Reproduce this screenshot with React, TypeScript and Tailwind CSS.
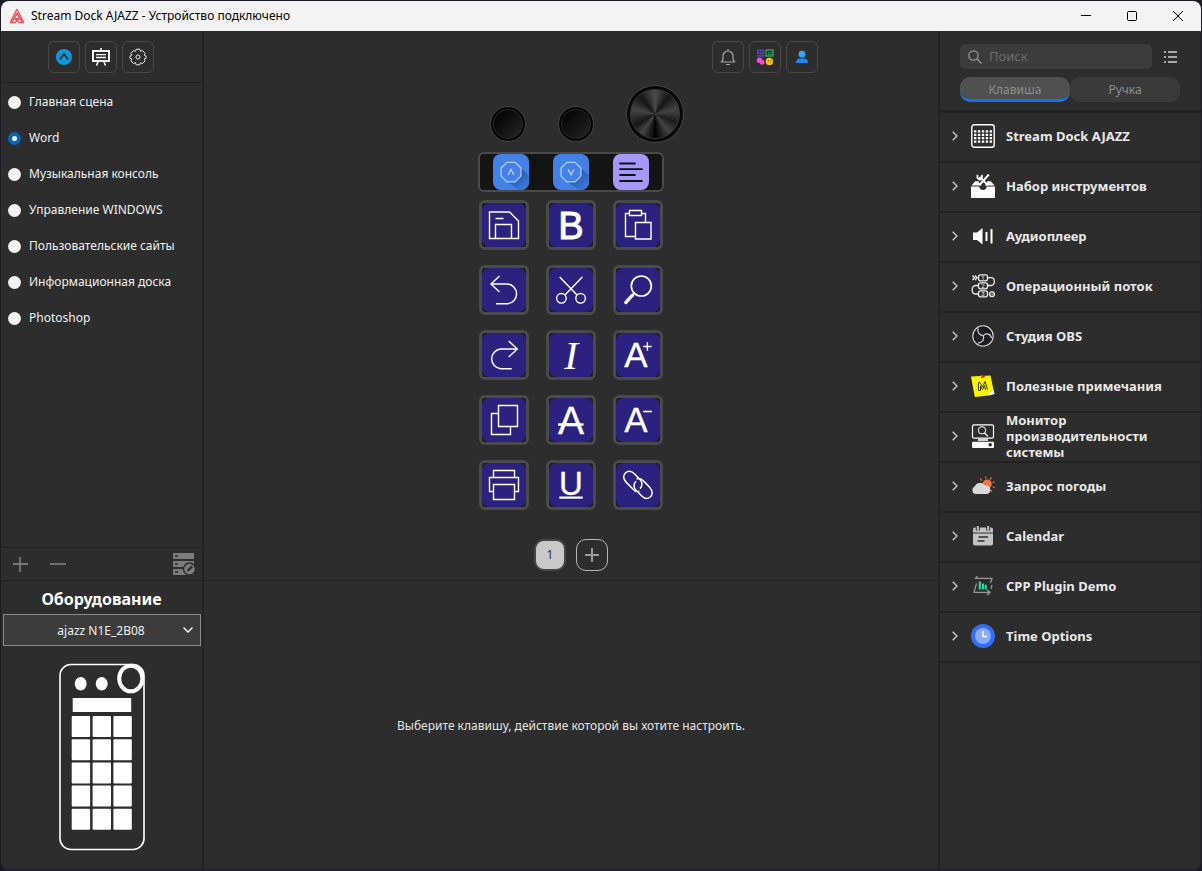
import { ReactNode, useState } from 'react';

const scenes = [
    'Главная сцена',
    'Word',
    'Музыкальная консоль',
    'Управление WINDOWS',
    'Пользовательские сайты',
    'Информационная доска',
    'Photoshop',
];

const glyph = {
    fill: '#fff',
    stroke: '#fff',
    strokeWidth: 0.3,
    textAnchor: 'middle' as const,
    fontFamily: '"Liberation Sans", Arial, sans-serif',
    fontWeight: 400,
};

// Icons of the 15 keys, all drawn on a 50x50 canvas
const keyIcons: { name: string; icon: ReactNode }[] = [
    {
        name: 'Сохранить',
        icon: <path d="M10.5 12H30.5L39.5 21V38.5H10.5ZM16.5 18.5H24.5M16.5 38.5V24.5H32.5V38.5" />,
    },
    { name: 'Полужирный', icon: <text x="25" y="38.5" fontSize="38" {...glyph} strokeWidth={1}>B</text> },
    {
        name: 'Вставить',
        icon: (
            <>
                <path d="M16.5 13.5H12.5V36.5H22.5M28.5 13.5H32.5V22.5" />
                <path d="M16.5 10.5H28.5V15.5H16.5ZM22.5 22.5H38V39H22.5Z" />
            </>
        ),
    },
    { name: 'Отменить', icon: <path d="M20.5 11L12 19L20.5 27M12 19H28.7A9.9 9.9 0 0 1 28.7 38.7H17" /> },
    {
        name: 'Вырезать',
        icon: (
            <>
                <path d="M13.7 12L31 30M36.3 12L19 30" />
                <circle cx="15.4" cy="33.3" r="4.8" />
                <circle cx="34.6" cy="33.3" r="4.8" />
            </>
        ),
    },
    {
        name: 'Найти',
        icon: (
            <>
                <circle cx="28.3" cy="21" r="10" strokeWidth="1.7" />
                <path d="M21.5 28L18.5 31.2" strokeWidth="1.7" />
                <path d="M19.5 30.2L12.9 37.4" strokeWidth="3.4" strokeLinecap="round" />
            </>
        ),
    },
    { name: 'Повторить', icon: <path d="M29.7 11L38.3 19L29.7 27M38.3 19H21.6A9.9 9.9 0 0 0 21.6 38.7H32.7" /> },
    {
        name: 'Курсив',
        icon: (
            <text x="25" y="38.5" fontSize="41" {...glyph} stroke="none" fontFamily='"Liberation Serif", serif' fontStyle="italic">I</text>
        ),
    },
    {
        name: 'Увеличить шрифт',
        icon: (
            <>
                <text x="23" y="37.3" fontSize="35" {...glyph}>A</text>
                <path d="M30.2 16.5H38.6M34.4 12.3V20.7" />
            </>
        ),
    },
    {
        name: 'Копировать',
        icon: <path d="M19.5 10.5H38.5V31.5H19.5ZM19.5 18.5H12.5V39.5H31.5V31.5" />,
    },
    {
        name: 'Зачёркнутый',
        icon: (
            <>
                <text x="25" y="39" fontSize="39" {...glyph}>A</text>
                <path d="M12 29.5H37.6" strokeWidth="2.4" />
            </>
        ),
    },
    {
        name: 'Уменьшить шрифт',
        icon: (
            <>
                <text x="23" y="37.3" fontSize="35" {...glyph}>A</text>
                <path d="M30.2 16.5H38.8" strokeWidth="1.6" />
            </>
        ),
    },
    {
        name: 'Печать',
        icon: (
            <>
                <path d="M14.5 17.5V10.5H35.5V17.5M14.5 31.5H10.5V17.5H39.5V31.5H35.5" />
                <path d="M14.5 24.5H35.5V39.5H14.5Z" />
            </>
        ),
    },
    {
        name: 'Подчёркнутый',
        icon: (
            <>
                <text x="25" y="34.5" fontSize="33" {...glyph}>U</text>
                <path d="M13.3 37.6H36.7" strokeWidth="2.2" />
            </>
        ),
    },
    {
        name: 'Ссылка',
        icon: (
            <g strokeWidth="1.5">
                <path d="M26.4 30.8C23 32.6 21 30.4 18.6 27.8L13.3 22.4C9.6 18.6 10.2 14.8 12.6 12.8C15 10.7 18.4 10.8 21.4 13.8L27.2 19.7C29.6 22.2 29.5 26.4 27 28.6" />
                <path d="M23.6 19.2C27 17.4 29.4 19.8 32 22.4L36.8 27.4C40.4 31.2 39.4 35 37.2 37C34.8 39 31.6 38.8 28.8 36L22.8 30C20.4 27.6 20.4 23.4 23 21.2" />
            </g>
        ),
    },
];

// Plugin icons are drawn on a 24x24 canvas
const plugins: { name: string; icon: ReactNode }[] = [
    {
        name: 'Stream Dock AJAZZ',
        icon: (
            <>
                <rect x=".8" y=".8" width="22.4" height="22.4" rx="2.5" fill="none" stroke="#fff" strokeWidth="1.4" />
                {[7.4, 10.8, 14.2, 17.6].map((y) => (
                    <path key={y} d={`M3 ${y}H21`} fill="none" stroke="#fff" strokeWidth="2.2" strokeDasharray="2.4 1.5" />
                ))}
            </>
        ),
    },
    {
        name: 'Набор инструментов',
        icon: (
            <>
                <path d="M0 12.5H8.2C8.8 15.3 10 16 12 16S15.2 15.3 15.8 12.5H24V24H0Z" fill="#fff" />
                <path d="M.5 11.5L4.2 7.2H7.5L10 11.5ZM23.5 11.5L19.8 7.2H16.5L14 11.5Z" fill="#fff" />
                <path d="M8.5 3L17 11.2M17.8 .5L8.5 11" stroke="#fff" strokeWidth="2" />
                <path d="M6.4 .8V3.8L8.6 5.6L11 4V.8" fill="none" stroke="#fff" strokeWidth="1.7" />
                <circle cx="12" cy="13" r="2.2" fill="#2d2d2d" />
            </>
        ),
    },
    {
        name: 'Аудиоплеер',
        icon: (
            <>
                <path d="M2 8.5H6L11.5 4V20.5L6 16H2Z" fill="#fff" />
                <path d="M15.5 8V17M20.5 5V19.5" stroke="#fff" strokeWidth="2" />
            </>
        ),
    },
    {
        name: 'Операционный поток',
        icon: (
            <g fill="none" stroke="#eee" strokeWidth="1.3">
                <path d="M1.5 1.5L3.5 3.7L1.5 6M4 1.5L6 3.7L4 6M16.5 3.7H20C24.5 3.7 24.5 11.5 20 11.5H16.5M7 11.5H4.5C0 11.5 0 20 4.5 20H7" />
                {[1, 2, 3].map((n) => (
                    <g key={n}>
                        <rect x="7.5" y={n * 8 - 7.2} width="9" height="6" rx="2" />
                        <text x="12" y={n * 8 - 2} textAnchor="middle" fontSize="6" fontFamily="Roboto, sans-serif" fill="#eee" stroke="none">{n}</text>
                    </g>
                ))}
                <circle cx="21" cy="20.2" r="2.4" />
                <path d="M19.8 20.2L20.8 21.2L22.4 19.2" strokeWidth=".8" />
            </g>
        ),
    },
    {
        name: 'Студия OBS',
        icon: (
            <>
                <circle cx="12" cy="12" r="10.2" fill="#1c1a1e" stroke="#ddd" strokeWidth="1.1" />
                <g fill="none" stroke="#ccc" strokeWidth="1.3">
                    <path d="M7 4.3C6.2 8.4 8.2 11.3 12.2 11.6" />
                    <path d="M20.5 14.2C19.5 9.6 15.3 8.6 12.2 11.6" />
                    <path d="M7.2 19C11.5 18.8 13.8 15.5 12.2 11.6" />
                </g>
            </>
        ),
    },
    {
        name: 'Полезные примечания',
        icon: (
            <>
                <path d="M0 2.5L19.5 1.5L22.5 16L17.5 21.5L3.8 23Z" fill="#fdf500" />
                <path d="M22.5 16L23.5 20L17.5 21.7L18.5 17.5Z" fill="#fff" />
                <path d="M7.5 16.5V8.5H9L11.5 13L14 7.5L16.5 15.5M7.5 16.5H9.5V12L11.5 15.5L13.5 11.5L14.5 16" fill="none" stroke="#3a3a10" strokeWidth="1" />
                <path d="M9.5 .8L13 2.8L10 3.6" stroke="#d8281c" strokeWidth="1.4" fill="none" />
            </>
        ),
    },
    {
        name: 'Монитор производительности системы',
        icon: (
            <>
                <rect x="1.5" y=".8" width="21" height="13.4" rx="1.5" fill="none" stroke="#fff" strokeWidth="1.2" />
                <circle cx="11" cy="6.3" r="3.7" fill="none" stroke="#fff" strokeWidth="1" />
                <path d="M13.5 9L17 12.4" stroke="#fff" strokeWidth="1.2" />
                <path d="M7 16H17" stroke="#fff" strokeWidth="1.6" />
                <rect x="1" y="17.8" width="22" height="6.2" rx="1" fill="#fff" />
                <circle cx="19.2" cy="20.8" r="1.8" fill="#2d2d2d" />
            </>
        ),
    },
    {
        name: 'Запрос погоды',
        icon: (
            <>
                <path d="M10.7 6.6L9.3 4.2M14.8 4.8V2.6M19 5.6L20.4 3.4M21.4 8.8L23.6 8M21.6 12.8L23.6 13.8M19.5 15.8L21 17.6" stroke="#e8703f" strokeWidth="1.2" />
                <circle cx="16.2" cy="10" r="4.6" fill="#f07640" />
                <path d="M4 20A4 4 0 0 1 3.6 12.6A6 6 0 0 1 14.2 11.6A4.4 4.4 0 0 1 16.6 20Z" fill="#d9d9d9" />
            </>
        ),
    },
    {
        name: 'Calendar',
        icon: (
            <>
                <path d="M2 8.5V5.2Q2 3.5 3.8 3.5H20.2Q22 3.5 22 5.2V8.5Z" fill="#c4c4c4" />
                <path d="M2 9.5H22V19.5Q22 21.5 20 21.5H4Q2 21.5 2 19.5Z" fill="#c4c4c4" />
                <path d="M6.8 2V6.5M17.2 2V6.5" stroke="#2d2d2d" strokeWidth="4" />
                <path d="M6.8 2V6.5M17.2 2V6.5" stroke="#c4c4c4" strokeWidth="2" />
                <path d="M7.5 13H17M6.5 17H13.5" stroke="#2d2d2d" strokeWidth="1.3" />
            </>
        ),
    },
    {
        name: 'CPP Plugin Demo',
        icon: (
            <>
                <path d="M6.5 2.2L4.5 4.3H21L19.5 9M17.8 19.8L19 18.3H3L5.5 9.5M16 16L19 18.3L16 21M21 11L20 15" fill="none" stroke="#999" strokeWidth="1.2" />
                <path d="M8.8 7.5V15.5M12 9.5V15.5M14.8 10.8V15.5" stroke="#27d8a4" strokeWidth="2.2" />
            </>
        ),
    },
    {
        name: 'Time Options',
        icon: (
            <>
                <circle cx="12" cy="12" r="12" fill="#326df4" />
                <circle cx="12" cy="12" r="8" fill="#86acfa" />
                <path d="M12 7V12.5H16" fill="none" stroke="#fff" strokeWidth="1.5" />
            </>
        ),
    },
];

const ToolButton = ({ label, children }: { label: string; children: ReactNode }) => (
    <button aria-label={label} className="flex size-8 shrink-0 items-center justify-center rounded-md border border-[#484848]">
        <svg viewBox="0 0 18 18" className="size-[18px]" fill="none">{children}</svg>
    </button>
);

const TitleBar = () => (
    <header className="flex h-[30px] shrink-0 items-center bg-[#f3f3f3] pl-2 text-black">
        <svg viewBox="0 0 16 16" className="size-4" fill="none" stroke="#e85a60">
            <path d="M8 1L1.2 14.6M8 1L14.8 14.6M8 4.6L3 14.4M8 4.6L13 14.4" strokeWidth="1.3" />
            <path d="M5.4 10.5L8 5.8L10.6 10.5ZM1 14.6H6.2L8 11.6L9.8 14.6H15M5.4 10.5L8 13L10.6 10.5" strokeWidth="1.1" />
        </svg>
        <h1 className="ml-1.5 flex-1 text-xs">Stream Dock AJAZZ - Устройство подключено</h1>
        <div className="flex h-full">
            <button aria-label="Свернуть" className="flex w-[46px] items-center justify-center">
                <svg viewBox="0 0 10 10" className="size-2.5" stroke="#000"><path d="M0 4.5H10" /></svg>
            </button>
            <button aria-label="Развернуть" className="flex w-[46px] items-center justify-center">
                <svg viewBox="0 0 10 10" className="size-2.5" stroke="#000" fill="none"><rect x=".5" y=".5" width="9" height="9" rx="1" /></svg>
            </button>
            <button aria-label="Закрыть" className="flex w-[46px] items-center justify-center">
                <svg viewBox="0 0 10 10" className="size-2.5" stroke="#000"><path d="M0 0L10 10M10 0L0 10" /></svg>
            </button>
        </div>
    </header>
);

const DevicePreview = () => (
    <svg viewBox="-1 0 87 188" className="mx-auto mt-[17px] mb-[19px] h-[188px] w-[87px]" fill="#fff">
        <rect x="1" y="1.5" width="84" height="185" rx="11" fill="none" stroke="#fff" strokeWidth="1.6" />
        <ellipse cx="21.7" cy="20.7" rx="6" ry="6.8" />
        <ellipse cx="42.7" cy="20.7" rx="6" ry="6.8" />
        <ellipse cx="71.8" cy="15.5" rx="11.6" ry="12.8" fill="#2d2d2d" stroke="#fff" strokeWidth="4" />
        <rect x="13.7" y="35" width="58.5" height="14" />
        {[0, 1, 2, 3, 4].map((row) =>
            [12.7, 33.6, 54.4].map((x) => (
                <rect key={`${row}-${x}`} x={x} y={53 + row * 23.2} width="18.4" height="21" rx="1" />
            ))
        )}
    </svg>
);

const Sidebar = () => {
    const [scene, setScene] = useState('Word');

    return (
        <aside className="flex w-[203px] shrink-0 flex-col border-r-2 border-[#232323]">
            <div className="flex h-[52px] items-center justify-center gap-[5px] border-b border-[#222] pr-0.5">
                <ToolButton label="Главная">
                    <circle cx="9" cy="9" r="8" fill="#1296db" />
                    <path d="M4.8 11.6L9 6L13.2 11.6" stroke="#2d2d2d" strokeWidth="1.7" />
                </ToolButton>
                <ToolButton label="Презентация">
                    <path d="M9 0V3M6 14L4.5 17.5M12 14L13.5 17.5" stroke="#fff" strokeWidth="1.6" />
                    <rect x="1" y="3" width="16" height="10" stroke="#fff" strokeWidth="1.9" />
                    <path d="M4 6.7H14M4 9.5H14" stroke="#fff" strokeWidth="1.3" />
                </ToolButton>
                <ToolButton label="Настройки">
                    <path
                        d="M7.2 1.2L10.8 1.2L11.5 3.3L13.6 2.6L16.2 5.4L15.2 7.2L17 8V10.3L15.2 11L16.1 12.9L13.6 15.5L11.5 14.7L10.8 16.8H7.2L6.5 14.7L4.4 15.5L1.9 12.9L2.8 11L1 10.3V8L2.8 7.2L1.8 5.4L4.4 2.6L6.5 3.3Z"
                        stroke="#e5e5e5"
                        strokeLinejoin="round"
                    />
                    <circle cx="9" cy="9" r="2.1" stroke="#e5e5e5" />
                </ToolButton>
            </div>

            <div role="radiogroup" aria-label="Сцены" className="flex-1 pt-px">
                {scenes.map((name) => (
                    <label key={name} className="flex h-9 items-center gap-2 pl-[7px] text-xs text-[#f0f0f0]">
                        <input
                            type="radio"
                            name="scene"
                            checked={scene === name}
                            onChange={() => setScene(name)}
                            className="size-[13px] appearance-none rounded-full bg-[#f3f3f3] checked:border-4 checked:border-[#0a62b8] checked:bg-white"
                        />
                        {name}
                    </label>
                ))}
            </div>

            <div className="flex h-[34px] items-center border-y border-[#222] pr-1.5 pl-3">
                <button aria-label="Добавить сцену">
                    <svg viewBox="0 0 15 15" className="size-[15px]" stroke="#777" strokeWidth="1.8"><path d="M0 7H15M7 0V15" /></svg>
                </button>
                <button aria-label="Удалить сцену" className="ml-[22px]">
                    <svg viewBox="0 0 16 15" className="h-[15px] w-4" stroke="#777" strokeWidth="1.8"><path d="M0 7H16" /></svg>
                </button>
                <button aria-label="Изменить сцены" className="ml-auto">
                    <svg viewBox="0 0 24 24" className="size-6">
                        <path d="M1 1H22V7H1ZM1 9H22V15H1ZM1 17H22V23H1Z" fill="#7c7c7c" />
                        <path d="M3 4H6M3 12H6M3 20H6" stroke="#2d2d2d" strokeWidth="1.3" />
                        <circle cx="17.5" cy="17" r="6" fill="#7c7c7c" stroke="#2d2d2d" strokeWidth="1.4" />
                        <path d="M15 19.8L15.6 17L19.4 13.4L21 15L17.4 18.8Z" fill="#2d2d2d" />
                    </svg>
                </button>
            </div>

            <section>
                <h2 className="h-[33px] pt-1.5 text-center text-base leading-6 font-bold text-white">
                    <label htmlFor="device">Оборудование</label>
                </h2>
                <div className="relative mr-px ml-0.5">
                    <select
                        id="device"
                        className="h-8 w-full appearance-none border border-[#8a8a8a] bg-[#3c3c3c] pt-px pr-0.5 text-xs text-[#f0f0f0] [text-align-last:center]"
                    >
                        <option>ajazz N1E_2B08</option>
                    </select>
                    <svg viewBox="0 0 10 6" className="pointer-events-none absolute top-[13px] right-2 h-1.5 w-2.5" fill="none" stroke="#fff" strokeWidth="1.4">
                        <path d="M.5 .5L5 5L9.5 .5" />
                    </svg>
                </div>
                <DevicePreview />
            </section>
        </aside>
    );
};

const SmallKnob = ({ label }: { label: string }) => (
    <button
        aria-label={label}
        className="mb-px flex size-9 shrink-0 items-center justify-center rounded-full border border-[#444] bg-[#050505]"
    >
        <span className="size-[30px] rounded-full border border-[#2a2a2a] bg-linear-135 from-[#030303] to-[#262626]" />
    </button>
);

const Octagon = ({ label, arrow, id }: { label: string; arrow: string; id: string }) => (
    <button aria-label={label} className="size-9 overflow-hidden rounded-lg bg-[#4381e6]">
        <svg viewBox="0 0 36 36" className="size-9" fill="none">
            <defs>
                <linearGradient id={id} x1="0" y1="0" x2="1" y2="1">
                    <stop offset=".3" stopColor="#1f52a8" />
                    <stop offset="1" stopColor="#4381e6" />
                </linearGradient>
            </defs>
            <path d="M26 12L36 22V36H26L11 25Z" fill={`url(#${id})`} />
            <path d="M13.9 8.3H22.1L27.9 14.1V22.1L22.1 27.9H13.9L8.1 22.1V14.1Z" fill="#4381e6" stroke="#b4cdf8" strokeWidth="1.3" />
            <path d={arrow} stroke="#b4cdf8" strokeWidth="1.4" />
        </svg>
    </button>
);

const Device = () => (
    <div className="mx-auto mt-1 w-[186px]">
        <div className="flex items-end gap-8 pl-3">
            <SmallKnob label="Ручка 1" />
            <SmallKnob label="Ручка 2" />
            <button
                aria-label="Ручка 3"
                className="flex size-[58px] shrink-0 items-center justify-center rounded-full border border-[#444] bg-[#080808]"
            >
                <span className="size-[50px] rounded-full border border-[#383838] bg-[conic-gradient(#4c4c4c_0deg,#151515_38deg,#444_78deg,#1c1c1c_112deg,#444_142deg,#000_180deg,#444_215deg,#161616_240deg,#444_282deg,#151515_320deg,#4c4c4c_360deg)]" />
            </button>
        </div>

        <div className="mt-[9px] flex h-10 items-center justify-between rounded-md border-2 border-[#4a4a4a] bg-[#141414] px-[13px]">
            <Octagon label="Вверх" arrow="M15 20.8L18 15.4L21 20.8" id="shade-up" />
            <Octagon label="Вниз" arrow="M15 15.4L18 20.8L21 15.4" id="shade-down" />
            <button aria-label="Абзац" className="size-9 rounded-lg bg-[#a399fb]">
                <svg viewBox="0 0 36 36" className="size-9" stroke="#111" strokeWidth="1.8" strokeLinecap="round">
                    <path d="M7 9.5H22M7 15.2H29M7 21H22M7 27H29" />
                </svg>
            </button>
        </div>

        <div className="mt-2 grid grid-cols-[repeat(3,50px)] justify-center gap-x-[17px] gap-y-[15px]">
            {keyIcons.map(({ name, icon }) => (
                <button key={name} aria-label={name} className="flex size-[50px] items-center justify-center rounded-md border-3 border-[#4a4a4a] bg-[#1e1e22]">
                    <span className="flex size-11 items-center justify-center rounded-lg bg-[#2b227f]">
                        <svg viewBox="3 3 44 44" className="size-11 overflow-visible" fill="none" stroke="#fff" strokeWidth="1.4">
                            {icon}
                        </svg>
                    </span>
                </button>
            ))}
        </div>
    </div>
);

const Workspace = () => (
    <main className="flex min-w-0 flex-1 flex-col">
        <div className="flex flex-1 flex-col">
            <div className="flex justify-end gap-[5px] pt-2.5 pr-[120px]">
                <ToolButton label="Уведомления">
                    <path d="M9 1V2.5M3 14V12.8L4 11.5V8A5 5 0 0 1 14 8V11.5L15 12.8V14ZM1.8 14H16.2M7 16.5H11" stroke="#aaa" strokeWidth="1.2" />
                </ToolButton>
                <ToolButton label="Магазин">
                    <path d="M1 2.5H8M1 5.2H8M1 7.9H8" stroke="#5a4fd8" strokeWidth="1.9" strokeDasharray="1.9 .65" />
                    <rect x="10" y="2" width="7" height="6" stroke="#2fae62" strokeWidth="1.3" />
                    <path d="M12 4.5H13M14.5 4.5H15.5M12 6.3H15" stroke="#2fae62" />
                    <circle cx="3.6" cy="12.2" r="2.8" fill="#e84fd8" />
                    <circle cx="6.2" cy="14.4" r="2.4" fill="#e84fd8" />
                    <circle cx="13.4" cy="13.4" r="3.7" fill="#f2c21a" />
                    <path d="M12 13H12.9M14.2 13H15.1" stroke="#5a4510" />
                </ToolButton>
                <ToolButton label="Профиль">
                    <circle cx="9" cy="6.2" r="3.4" fill="#39a0ff" />
                    <path d="M3 15Q3 10.5 7 10.5H11Q15 10.5 15 15Z" fill="#1e86f5" />
                </ToolButton>
            </div>

            <div className="pt-2">
                <Device />
            </div>

            <nav aria-label="Страницы" className="mt-[29px] flex justify-center gap-2.5">
                <button className="size-8 rounded-[10px] border-2 border-[#484848] bg-[#c9c9c9] text-xs text-[#333]">1</button>
                <button aria-label="Добавить страницу" className="flex size-8 items-center justify-center rounded-[10px] border border-[#b8b8b8]">
                    <svg viewBox="0 0 14 14" className="size-3.5" stroke="#9a9a9a" strokeWidth="2"><path d="M0 7H14M7 0V14" /></svg>
                </button>
            </nav>
        </div>

        <div className="flex h-[290px] shrink-0 items-center justify-center border-t border-[#222] text-xs text-[#e4e4e4]">
            <p>Выберите клавишу, действие которой вы хотите настроить.</p>
        </div>
    </main>
);

const PluginPanel = () => (
    <aside className="flex w-[263px] shrink-0 flex-col border-l-2 border-[#232323]">
        <div className="border-b-3 border-[#222] px-5 pt-[13px] pb-2">
            <div className="flex items-center">
                <div className="flex h-[25px] w-48 items-center rounded-md bg-[#3c3c3c] pl-2">
                    <svg viewBox="0 0 14 14" className="size-3.5 shrink-0" fill="none" stroke="#999" strokeWidth="1.2">
                        <circle cx="5.5" cy="5.5" r="4.7" />
                        <path d="M9 9L13.5 13.5" />
                    </svg>
                    <input
                        type="text"
                        aria-label="Поиск"
                        placeholder="Поиск"
                        className="ml-[7px] w-full min-w-0 bg-transparent text-[13px] text-white outline-none placeholder:text-[#6b6b6b]"
                    />
                </div>
                <button aria-label="Список" className="ml-3">
                    <svg viewBox="0 0 14 12" className="h-3 w-3.5" stroke="#a8a8a8" strokeWidth="2">
                        <path d="M0 1H2M4 1H13M0 6H2M4 6H13M0 11H2M4 11H13" />
                    </svg>
                </button>
            </div>
            <div role="tablist" className="mt-2 flex w-[220px] text-xs text-[#8c8c8c]">
                <button role="tab" aria-selected="true" className="h-[25px] flex-1 rounded-[10px] border-b-3 border-[#1473e6] bg-[#505050] pt-[3px]">
                    Клавиша
                </button>
                <button role="tab" aria-selected="false" className="h-[25px] flex-1 rounded-[10px] bg-[#3a3a3a]">
                    Ручка
                </button>
            </div>
        </div>

        <ul>
            {plugins.map(({ name, icon }) => (
                <li key={name} className="border-b-2 border-[#222]">
                    <button aria-expanded="false" className="flex h-12 w-full items-center pb-0.5 pl-3 text-left">
                        <svg viewBox="0 0 6 10" className="h-2.5 w-1.5 shrink-0" fill="none" stroke="#c8c8c8" strokeWidth="1.4">
                            <path d="M.7 .7L5 5L.7 9.3" />
                        </svg>
                        <svg viewBox="0 0 24 24" className="ml-[13px] size-6 shrink-0">{icon}</svg>
                        <span className="ml-[11px] w-40 text-[13px] leading-4 font-bold text-[#e8e8e8]">{name}</span>
                    </button>
                </li>
            ))}
        </ul>
    </aside>
);

const App = () => {
    return (
        <div className="flex min-h-screen bg-[#1a1b26] p-px font-['Noto_Sans','Open_Sans',sans-serif]">
            <div className="flex min-w-0 flex-1 flex-col overflow-hidden rounded-lg bg-[#2d2d2d]">
                <TitleBar />
                <div className="flex flex-1">
                    <Sidebar />
                    <Workspace />
                    <PluginPanel />
                </div>
            </div>
        </div>
    )
}

export default App
